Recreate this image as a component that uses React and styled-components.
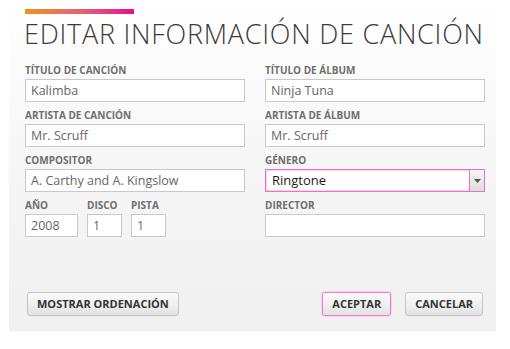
import React from "react";
import styled, { createGlobalStyle } from "styled-components";

const GlobalStyle = createGlobalStyle`
  html, body {
    margin: 0;
    padding: 0;
    background: #ffffff;
  }
  body {
    font-family: "Open Sans", "Noto Sans", sans-serif;
  }
`;

const App = () => {
  return (
    <>
      <GlobalStyle />
      <Panel>
        <Accent />
        <Title>EDITAR INFORMACIÓN DE CANCIÓN</Title>
        <Columns>
          <Column>
            <Field>
              <Label>TÍTULO DE CANCIÓN</Label>
              <Input>Kalimba</Input>
            </Field>
            <Field>
              <Label>ARTISTA DE CANCIÓN</Label>
              <Input>Mr. Scruff</Input>
            </Field>
            <Field>
              <Label>COMPOSITOR</Label>
              <Input>A. Carthy and A. Kingslow</Input>
            </Field>
            <SmallRow>
              <Field>
                <Label>AÑO</Label>
                <Input width="53px">2008</Input>
              </Field>
              <Field>
                <Label>DISCO</Label>
                <Input width="35px">1</Input>
              </Field>
              <Field>
                <Label>PISTA</Label>
                <Input width="35px">1</Input>
              </Field>
            </SmallRow>
          </Column>
          <Column>
            <Field>
              <Label>TÍTULO DE ÁLBUM</Label>
              <Input>Ninja Tuna</Input>
            </Field>
            <Field>
              <Label>ARTISTA DE ÁLBUM</Label>
              <Input>Mr. Scruff</Input>
            </Field>
            <Field>
              <Label>GÉNERO</Label>
              <Select>
                <SelectValue>Ringtone</SelectValue>
                <SelectArrow>
                  <svg width="7" height="4" viewBox="0 0 7 4">
                    <path d="M0 0h7L3.5 4z" fill="#555" />
                  </svg>
                </SelectArrow>
              </Select>
            </Field>
            <Field>
              <Label>DIRECTOR</Label>
              <Input />
            </Field>
          </Column>
        </Columns>
        <Footer>
          <Button>MOSTRAR ORDENACIÓN</Button>
          <Actions>
            <Button primary>ACEPTAR</Button>
            <Button>CANCELAR</Button>
          </Actions>
        </Footer>
      </Panel>
    </>
  );
};

export default App;

const Panel = styled.div`
  margin-left: 9px;
  width: 487px;
  height: 331px;
  box-sizing: border-box;
  padding: 9px 11px 15px 16px;
  display: flex;
  flex-direction: column;
  background: linear-gradient(180deg, #ffffff 0%, #f7f7f7 45%, #f0f0f0 100%);
`;

const Accent = styled.div`
  width: 109px;
  height: 5px;
  background: linear-gradient(90deg, #f39021 0%, #e0607a 55%, #ea0c8c 100%);
`;

const Title = styled.h1`
  margin: 3px 0 0 -1px;
  font-family: "Open Sans", "Noto Sans", sans-serif;
  font-weight: 300;
  font-size: 27px;
  line-height: 34px;
  color: #3b3b3b;
  letter-spacing: 0.75px;
  white-space: nowrap;
`;

const Columns = styled.div`
  margin-top: 12px;
  display: grid;
  grid-template-columns: 220px 220px;
  column-gap: 20px;
`;

const Column = styled.div`
  display: flex;
  flex-direction: column;
  gap: 6px;
`;

const Field = styled.div`
  display: flex;
  flex-direction: column;
`;

const SmallRow = styled.div`
  display: flex;
  gap: 9px;
`;

const Label = styled.div`
  font-size: 10px;
  font-weight: 700;
  line-height: 14px;
  margin-bottom: 2px;
  color: #6e6e6e;
  white-space: nowrap;
`;

const Input = styled.div`
  width: ${(p) => p.width || "220px"};
  height: 23px;
  box-sizing: border-box;
  border: 1px solid #c9c9c9;
  background: #ffffff;
  padding: 0 5px;
  font-size: 12.5px;
  line-height: 21px;
  color: #6b6464;
  white-space: nowrap;
  overflow: hidden;
`;

const Select = styled.div`
  width: 220px;
  height: 23px;
  box-sizing: border-box;
  border: 1px solid #f070c4;
  box-shadow: inset 0 0 0 1px #fbd0ea;
  background: #ffffff;
  display: flex;
`;

const SelectValue = styled.div`
  flex: 1;
  padding: 0 6px;
  font-size: 13px;
  line-height: 21px;
  color: #1e1e1e;
`;

const SelectArrow = styled.div`
  width: 14px;
  border-left: 1px solid #f070c4;
  background: linear-gradient(180deg, #f6f6f6 0%, #dcdcdc 100%);
  display: flex;
  align-items: center;
  justify-content: center;
`;

const Footer = styled.div`
  margin-top: auto;
  display: flex;
  justify-content: space-between;
  padding: 0 2px 0 2px;
`;

const Actions = styled.div`
  display: flex;
  gap: 14px;
`;

const Button = styled.div`
  height: 24px;
  box-sizing: border-box;
  padding: 0 9px;
  border: 1px solid ${(p) => (p.primary ? "#f07cc6" : "#c3c3c3")};
  border-radius: 3px;
  background: linear-gradient(180deg, #fbfbfb 0%, #f0f0f0 50%, #e2e2e2 100%);
  box-shadow: ${(p) => (p.primary ? "0 0 0 1px #fad0ea" : "none")};
  font-size: 11px;
  font-weight: 700;
  line-height: 22px;
  color: #333333;
  white-space: nowrap;
`;
